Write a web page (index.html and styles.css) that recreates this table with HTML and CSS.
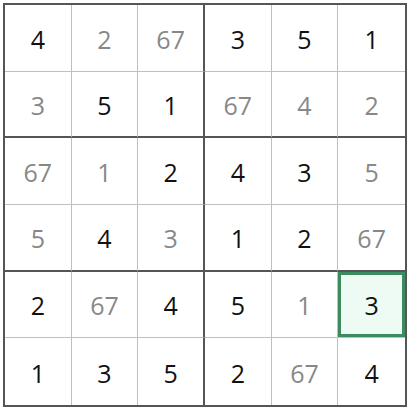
FILE: index.html
```html
<!DOCTYPE html>
<html>
<head>
<meta charset="utf-8">
<link rel="stylesheet" href="styles.css">
</head>
<body>
<div class="board">
  <div class="cell given">4</div><div class="cell">2</div><div class="cell bx">67</div><div class="cell given">3</div><div class="cell given">5</div><div class="cell given">1</div>
  <div class="cell by">3</div><div class="cell given by">5</div><div class="cell given bx by">1</div><div class="cell by">67</div><div class="cell by">4</div><div class="cell by">2</div>
  <div class="cell">67</div><div class="cell">1</div><div class="cell given bx">2</div><div class="cell given">4</div><div class="cell given">3</div><div class="cell">5</div>
  <div class="cell by">5</div><div class="cell given by">4</div><div class="cell bx by">3</div><div class="cell given by">1</div><div class="cell given by">2</div><div class="cell by">67</div>
  <div class="cell given">2</div><div class="cell">67</div><div class="cell given bx">4</div><div class="cell given">5</div><div class="cell">1</div><div class="cell given sel">3</div>
  <div class="cell given">1</div><div class="cell given">3</div><div class="cell given bx">5</div><div class="cell given">2</div><div class="cell">67</div><div class="cell given">4</div>
</div>
</body>
</html>
```
FILE: styles.css
```css
html, body {
  margin: 0;
  padding: 0;
  background: #fff;
}
body {
  padding: 3px;
}
.board {
  box-sizing: border-box;
  width: 404px;
  height: 404px;
  border: 2px solid #555;
  display: grid;
  grid-template-columns: repeat(6, 1fr);
  grid-template-rows: repeat(6, 1fr);
  font-family: "Open Sans", "Noto Sans", sans-serif;
  font-size: 25px;
}
.cell {
  display: flex;
  align-items: center;
  justify-content: center;
  padding-top: 2px;
  color: #888;
  border-right: 1px solid #bfbfbf;
  border-bottom: 1px solid #bfbfbf;
  box-sizing: border-box;
}
.cell:nth-child(6n) {
  border-right: none;
}
.cell:nth-child(n+31) {
  border-bottom: none;
}
.cell.bx {
  border-right: 2px solid #555;
}
.cell.by {
  border-bottom: 2px solid #555;
}
.given {
  color: #111;
}
.sel {
  background: #eefbf4;
  box-shadow: inset 0 0 0 3px #3d8c60;
}
```
